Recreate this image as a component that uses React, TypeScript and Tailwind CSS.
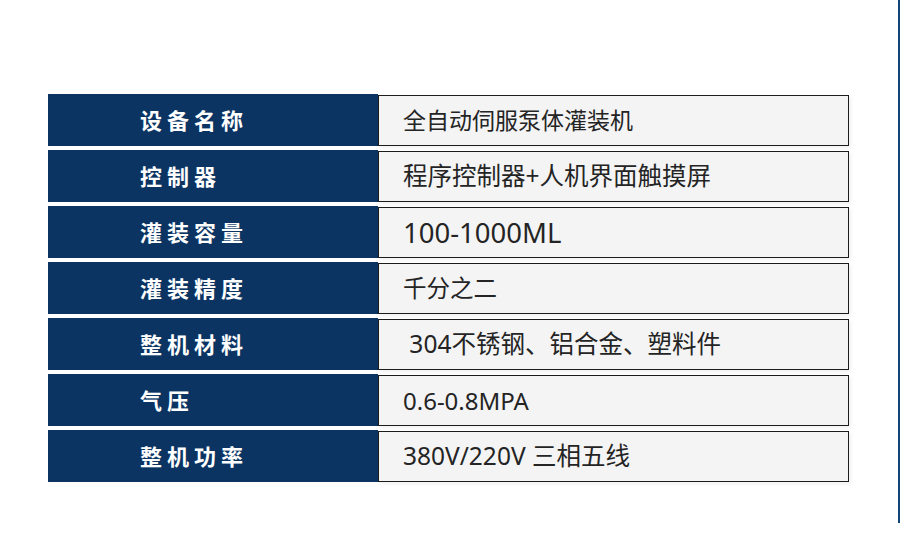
const specs = [
  { label: '设备名称', value: '全自动伺服泵体灌装机', size: 'text-[23px]' },
  { label: '控制器', value: '程序控制器+人机界面触摸屏', size: 'text-[24.5px]' },
  { label: '灌装容量', value: '100-1000ML', size: 'text-[27.5px]' },
  { label: '灌装精度', value: '千分之二', size: 'text-[23.5px]' },
  { label: '整机材料', value: ' 304不锈钢、铝合金、塑料件', size: 'text-[24.5px]' },
  { label: '气压', value: '0.6-0.8MPA', size: 'text-[24px]' },
  { label: '整机功率', value: '380V/220V 三相五线', size: 'text-[24.5px]' },
];

export default function App() {
  return (
    <div
      className="w-[900px] h-[551px] bg-white overflow-hidden"
      style={{ fontFamily: '"Noto Sans", "Noto Sans CJK SC", sans-serif' }}
    >
      <div className="h-[523px] border-r-2 border-[#124577] pt-[94px] pl-[48px] pr-[49px]">
        <div className="flex flex-col gap-1">
          {specs.map((row) => (
            <div key={row.label} className="flex h-[52px]">
              <div className="w-[330px] bg-[#0b3463] flex items-center pl-[92px]">
                <span className="text-[22px] font-bold text-white tracking-[5px]">{row.label}</span>
              </div>
              <div className="flex-1 bg-[#f4f4f4] border border-[#1c1c1c] mt-px flex items-center pl-[24px] shadow-[2px_2px_4px_rgba(0,0,0,0.06)]">
                <span className={`${row.size} text-[#242424] whitespace-pre`}>{row.value}</span>
              </div>
            </div>
          ))}
        </div>
      </div>
    </div>
  );
}
